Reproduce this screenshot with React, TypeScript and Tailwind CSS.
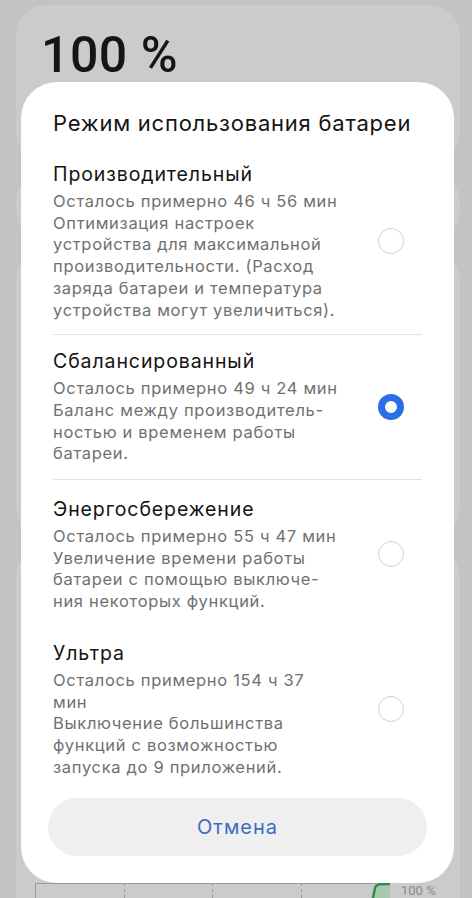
import React from "react";

const FONT = "font-['Inter','Noto_Sans',sans-serif]";

type Mode = {
  id: string;
  title: string;
  lines: string[];
  selected?: boolean;
  divider?: boolean;
  pad: string;
};

const MODES: Mode[] = [
  {
    id: "perf",
    title: "Производительный",
    lines: [
      "Осталось примерно 46 ч 56 мин",
      "Оптимизация настроек",
      "устройства для максимальной",
      "производительности. (Расход",
      "заряда батареи и температура",
      "устройства могут увеличиться).",
    ],
    divider: true,
    pad: "pt-[13px] pb-[13px]",
  },
  {
    id: "balanced",
    title: "Сбалансированный",
    lines: [
      "Осталось примерно 49 ч 24 мин",
      "Баланс между производитель-",
      "ностью и временем работы",
      "батареи.",
    ],
    selected: true,
    divider: true,
    pad: "pt-[13px] pb-[14px]",
  },
  {
    id: "saver",
    title: "Энергосбережение",
    lines: [
      "Осталось примерно 55 ч 47 мин",
      "Увеличение времени работы",
      "батареи с помощью выключе-",
      "ния некоторых функций.",
    ],
    pad: "pt-[16px] pb-[14px]",
  },
  {
    id: "ultra",
    title: "Ультра",
    lines: [
      "Осталось примерно 154 ч 37",
      "мин",
      "Выключение большинства",
      "функций с возможностью",
      "запуска до 9 приложений.",
    ],
    pad: "pt-[13px] pb-[14px]",
  },
];

function Radio({ checked }: { checked?: boolean }) {
  if (checked) {
    return <div className="w-[26px] h-[26px] rounded-full border-[7px] border-[#2a6fe6] bg-white" />;
  }
  return <div className="w-[26px] h-[26px] rounded-full border-[1.5px] border-[#d2d2d2] bg-white" />;
}

function ModeRow({ mode }: { mode: Mode }) {
  return (
    <div className={mode.divider ? "border-b border-[#e3e3e3]" : ""}>
      <div className={`flex items-center ${mode.pad}`}>
        <div className="w-[310px] shrink-0">
          <div className="text-[19.5px] leading-[26px] tracking-[0.9px] text-[#141414] mb-1 whitespace-nowrap">
            {mode.title}
          </div>
          <div className="text-[16.5px] leading-[21.7px] tracking-[0.68px] text-[#707070] whitespace-nowrap">
            {mode.lines.map((l, i) => (
              <div key={i}>{l}</div>
            ))}
          </div>
        </div>
        <div className="flex-1 flex justify-end pr-[18px]">
          <Radio checked={mode.selected} />
        </div>
      </div>
    </div>
  );
}

function Chart() {
  return (
    <svg width="444" height="20" viewBox="0 0 444 20" className="block">
      <line x1="19" y1="5.5" x2="360" y2="5.5" stroke="#9a9a9a" strokeWidth="1" />
      <line x1="19.5" y1="5" x2="19.5" y2="20" stroke="#9a9a9a" strokeWidth="1" />
      <line x1="108.5" y1="5" x2="108.5" y2="20" stroke="#9a9a9a" strokeDasharray="3 3" />
      <line x1="196.5" y1="5" x2="196.5" y2="20" stroke="#9a9a9a" strokeDasharray="3 3" />
      <line x1="285.5" y1="5" x2="285.5" y2="20" stroke="#9a9a9a" strokeDasharray="3 3" />
      <path d="M357 20 L359 10 Q360 6 366 6 L374 6 L374 20 Z" fill="#a9c9ac" />
      <path d="M357 20 L359 10 Q360 6 366 6 L374 6" fill="none" stroke="#2f8a45" strokeWidth="2.5" />
      <text x="385" y="17" fontSize="13" fill="#8a8a8a" fontFamily="Roboto, sans-serif">100 %</text>
    </svg>
  );
}

export default function App() {
  return (
    <div className={`relative w-[472px] h-[898px] overflow-hidden bg-[#c3c3c3] ${FONT}`}>
      {/* dimmed page behind the sheet */}
      <div className="flex flex-col gap-[10px] pt-[5px] pl-[16px] pr-[12px]">
        <div className="h-[157px] rounded-[30px] bg-[#cbcbcb] px-[25px] pt-[22px]">
          <div className="font-['Roboto',sans-serif] text-[50px] leading-[56px] font-medium text-[#151515] tracking-[0.5px]">
            100 %
          </div>
        </div>
        <div className="h-[68px] rounded-[30px] bg-[#cbcbcb]" />
        <div className="h-[287px] rounded-[30px] bg-[#cbcbcb]" />
        <div className="h-[351px] rounded-t-[30px] bg-[#cbcbcb] flex flex-col justify-end">
          <Chart />
        </div>
      </div>

      {/* battery mode sheet */}
      <div className="absolute left-[21px] top-[82px] w-[433px] h-[801px] rounded-[36px] bg-white px-[32px] pt-[26px]">
        <div className="text-[22px] leading-[30px] tracking-[0.77px] text-[#141414] mb-[10px] whitespace-nowrap">
          Режим использования батареи
        </div>
        {MODES.map(m => (
          <ModeRow key={m.id} mode={m} />
        ))}
        <div className="mt-[6px] -mx-[5px] h-[58px] rounded-full bg-[#efefef] flex items-center justify-center">
          <span className="text-[20px] tracking-[1px] text-[#3c6cc0]">Отмена</span>
        </div>
      </div>
    </div>
  );
}
